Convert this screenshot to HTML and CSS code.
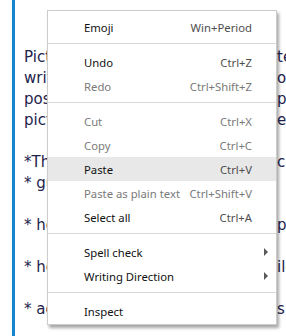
FILE: index.html
```html
<!DOCTYPE html>
<html lang="en">
<head>
    <meta charset="UTF-8">
    <meta name="viewport" content="width=device-width, initial-scale=1.0">
    <title>Editor</title>
    <link rel="stylesheet" href="styles.css">
</head>
<body>
    <div class="editor">
        <div class="line"><span class="line-start">Pictures and drawings help to illustra</span><span class="line-end">te</span></div>
        <div class="line"><span class="line-start">writing, so that the reader can follow and</span><span class="line-end">o</span></div>
        <div class="line"><span class="line-start">possible when a paragraph and a photo</span><span class="line-end">pg</span></div>
        <div class="line"><span class="line-start">pictures are placed side by side on the</span><span class="line-end">e</span></div>
        <div class="line blank"></div>
        <div class="line"><span class="line-start">*The steps to add a picture in the text are</span><span class="line-end">c</span></div>
        <div class="line"><span class="line-start">* guide the cursor to the place</span></div>
        <div class="line blank"></div>
        <div class="line"><span class="line-start">* hold the right mouse button to open the</span><span class="line-end">p</span></div>
        <div class="line blank"></div>
        <div class="line"><span class="line-start">* hover over the menu and choose the right f</span><span class="line-end">ile</span></div>
        <div class="line blank"></div>
        <div class="line"><span class="line-start">* add a short caption under the image, such a</span><span class="line-end">s <span class="paren">(</span></span></div>
    </div>

    <div class="menu">
        <div class="item"><span class="label">Emoji</span><span class="key">Win+Period</span></div>
        <div class="sep"></div>
        <div class="item"><span class="label">Undo</span><span class="key">Ctrl+Z</span></div>
        <div class="item off"><span class="label">Redo</span><span class="key">Ctrl+Shift+Z</span></div>
        <div class="sep"></div>
        <div class="item off"><span class="label">Cut</span><span class="key">Ctrl+X</span></div>
        <div class="item off"><span class="label">Copy</span><span class="key">Ctrl+C</span></div>
        <div class="item hover"><span class="label">Paste</span><span class="key">Ctrl+V</span></div>
        <div class="item off"><span class="label">Paste as plain text</span><span class="key">Ctrl+Shift+V</span></div>
        <div class="item"><span class="label">Select all</span><span class="key">Ctrl+A</span></div>
        <div class="sep"></div>
        <div class="item"><span class="label">Spell check</span><span class="key"></span><span class="arrow"></span></div>
        <div class="item"><span class="label">Writing Direction</span><span class="key"></span><span class="arrow"></span></div>
        <div class="sep"></div>
        <div class="item"><span class="label">Inspect</span></div>
    </div>
</body>
</html>
```

FILE: styles.css
```css
body {
    margin: 0;
    background-color: #ffffff;
    overflow: hidden;
}
.editor {
    margin-left: 12px;
    border-left: 3px solid #1585cf;
    padding: 47px 0 0 9px;
    min-height: 100vh;
    box-sizing: border-box;
    font-family: 'DejaVu Sans', sans-serif;
    font-size: 15px;
    line-height: 21px;
    color: #23234c;
}
.line {
    display: flex;
    height: 21px;
    white-space: nowrap;
}
.line-start {
    flex: 0 0 253px;
    overflow: hidden;
}
.line-end {
    flex: none;
}
.paren {
    color: #f0902a;
}
.menu {
    position: absolute;
    left: 47px;
    top: 10px;
    width: 230px;
    box-sizing: border-box;
    padding: 4px 0 1px;
    background-color: #ffffff;
    border: 1px solid #cccccc;
    box-shadow: 2px 3px 3px rgba(0, 0, 0, 0.35);
    font-family: 'Noto Sans', sans-serif;
    font-size: 11.3px;
    color: #111111;
}
.item {
    display: grid;
    grid-template-columns: 1fr auto 16px;
    align-items: center;
    height: 24px;
    padding: 0 8px 0 36px;
}
.item .key {
    color: #4e4e4e;
}
.item.off .label,
.item.off .key {
    color: #7a7a7a;
}
.item.hover {
    background-color: #e8e8e8;
}
.arrow {
    justify-self: end;
    width: 0;
    height: 0;
    border-left: 4px solid #5a5a5a;
    border-top: 4px solid transparent;
    border-bottom: 4px solid transparent;
}
.sep {
    height: 1px;
    margin: 4px 0 6px;
    background-color: #d8d8d8;
}
```
